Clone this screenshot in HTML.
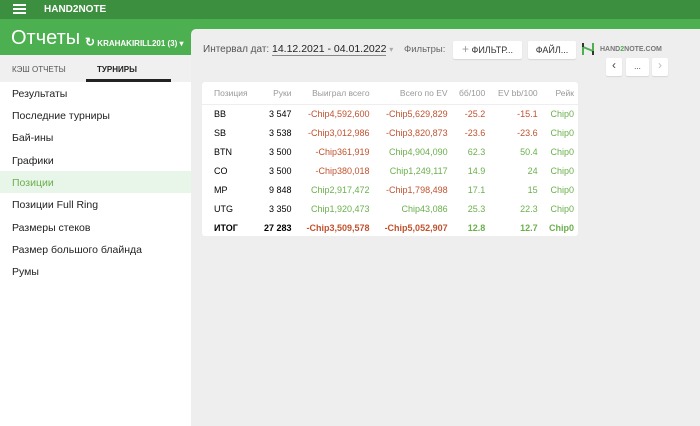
<!DOCTYPE html>
<html><head><meta charset="utf-8"><style>
*{margin:0;padding:0;box-sizing:border-box}
body{width:700px;height:426px;overflow:hidden;font-family:"Liberation Sans",sans-serif;background:#4caf50;position:relative}
.top{position:absolute;left:0;top:0;width:700px;height:19px;background:#3d8f40;color:#fff;font-size:10px;font-weight:bold}
.top .t{position:absolute;left:44px;top:4px}
.ham{position:absolute;left:13px;top:4px;width:13px;height:2px;background:#fff;box-shadow:0 4px 0 #fff,0 8px 0 #fff}
.hdr{position:absolute;left:0;top:19px;width:191px;height:36px;color:#fff}
.hdr .big{position:absolute;left:11px;top:8px;font-size:20px}
.hdr .usr{position:absolute;left:85px;top:16px;font-size:8px;font-weight:bold}
.tabs{position:absolute;left:0;top:55px;width:191px;height:27px;background:#f0f0f0;font-size:8px;font-weight:bold;color:#555}
.side{position:absolute;left:0;top:82px;width:191px;height:344px;background:#fff}
.item{position:absolute;left:0;width:191px;height:22px;font-size:10.5px;color:#222;padding:6px 0 0 12px}
.main{position:absolute;left:191px;top:29px;width:509px;height:397px;background:#eeeeee;border-top-left-radius:5px}
.card{position:absolute;left:11px;top:53px;width:376px;height:154px;background:#fff;border-radius:3px}
table{border-collapse:collapse;font-size:9px;position:absolute;left:0;top:0;width:376px}
td,th{height:19px;padding:0 4px;text-align:right;white-space:nowrap}
th{font-weight:normal;color:#999;height:22px;border-bottom:1px solid #eee;font-size:8.5px}
td:first-child,th:first-child{text-align:left;padding-left:12px}
.r{color:#c0532f}.g{color:#6ab04c}
.btn{position:absolute;background:#fff;border-radius:2px;font-size:9px;color:#333;text-align:center;box-shadow:0 1px 1px rgba(0,0,0,.1)}
</style></head><body>
<div class="top"><div class="ham"></div><div class="t">HAND2NOTE</div></div>
<div class="hdr"><div class="big">Отчеты</div><div class="usr"><span style="font-size:12px">↻</span> KRAHAKIRILL201 (3) ▾</div></div>
<div class="tabs"><span style="position:absolute;left:12px;top:10px;font-weight:normal">КЭШ ОТЧЕТЫ</span><span style="position:absolute;left:97px;top:10px;color:#222">ТУРНИРЫ</span><div style="position:absolute;left:86px;top:24px;width:85px;height:3px;background:#222"></div></div>
<div class="side">
<div class="item" style="top:0">Результаты</div>
<div class="item" style="top:22px">Последние турниры</div>
<div class="item" style="top:44px">Бай-ины</div>
<div class="item" style="top:67px">Графики</div>
<div class="item" style="top:89px;background:#e8f5e9;color:#6ab04c">Позиции</div>
<div class="item" style="top:111px">Позиции Full Ring</div>
<div class="item" style="top:134px">Размеры стеков</div>
<div class="item" style="top:156px">Размер большого блайнда</div>
<div class="item" style="top:178px">Румы</div>
</div>
<div class="main">
<div style="position:absolute;left:12px;top:14px;font-size:10px;color:#555">Интервал дат: <span style="color:#222;border-bottom:1px solid #888;font-size:10.5px">14.12.2021 - 04.01.2022</span> <span style="color:#aaa;font-size:8px">▾</span></div>
<div style="position:absolute;left:213px;top:15px;font-size:9.5px;color:#666">Фильтры:</div>
<div class="btn" style="left:262px;top:12px;width:69px;height:18px;padding-top:4px"><span style="color:#999;font-size:12px;line-height:8px">+</span> ФИЛЬТР...</div>
<div class="btn" style="left:337px;top:12px;width:48px;height:18px;padding-top:4px">ФАЙЛ...</div>
<svg style="position:absolute;left:390px;top:13px" width="14" height="14"><path d="M2 1V13M12 1V13M2 5L12 9" stroke="#4caf50" stroke-width="2" fill="none"/><path d="M2 1V5M12 9V13" stroke="#333" stroke-width="2"/></svg>
<div style="position:absolute;left:409px;top:17px;font-size:7px;font-weight:bold;color:#777">HAND<span style="color:#4caf50">2</span>NOTE.COM</div>
<div class="btn" style="left:415px;top:29px;width:16px;height:18px;font-size:12px;color:#444">‹</div>
<div class="btn" style="left:435px;top:29px;width:23px;height:18px;font-size:8px;padding-top:4px">...</div>
<div class="btn" style="left:461px;top:29px;width:16px;height:18px;font-size:12px;color:#bbb">›</div>
<div class="card"><table>
<tr><th>Позиция</th><th>Руки</th><th>Выиграл всего</th><th>Всего по EV</th><th>бб/100</th><th>EV bb/100</th><th>Рейк</th></tr>
<tr><td>BB</td><td>3 547</td><td class="r">-Chip4,592,600</td><td class="r">-Chip5,629,829</td><td class="r">-25.2</td><td class="r">-15.1</td><td class="g">Chip0</td></tr>
<tr><td>SB</td><td>3 538</td><td class="r">-Chip3,012,986</td><td class="r">-Chip3,820,873</td><td class="r">-23.6</td><td class="r">-23.6</td><td class="g">Chip0</td></tr>
<tr><td>BTN</td><td>3 500</td><td class="r">-Chip361,919</td><td class="g">Chip4,904,090</td><td class="g">62.3</td><td class="g">50.4</td><td class="g">Chip0</td></tr>
<tr><td>CO</td><td>3 500</td><td class="r">-Chip380,018</td><td class="g">Chip1,249,117</td><td class="g">14.9</td><td class="g">24</td><td class="g">Chip0</td></tr>
<tr><td>MP</td><td>9 848</td><td class="g">Chip2,917,472</td><td class="r">-Chip1,798,498</td><td class="g">17.1</td><td class="g">15</td><td class="g">Chip0</td></tr>
<tr><td>UTG</td><td>3 350</td><td class="g">Chip1,920,473</td><td class="g">Chip43,086</td><td class="g">25.3</td><td class="g">22.3</td><td class="g">Chip0</td></tr>
<tr style="font-weight:bold"><td>ИТОГ</td><td>27 283</td><td class="r">-Chip3,509,578</td><td class="r">-Chip5,052,907</td><td class="g">12.8</td><td class="g">12.7</td><td class="g">Chip0</td></tr>
</table></div>
</div>
</body></html>
